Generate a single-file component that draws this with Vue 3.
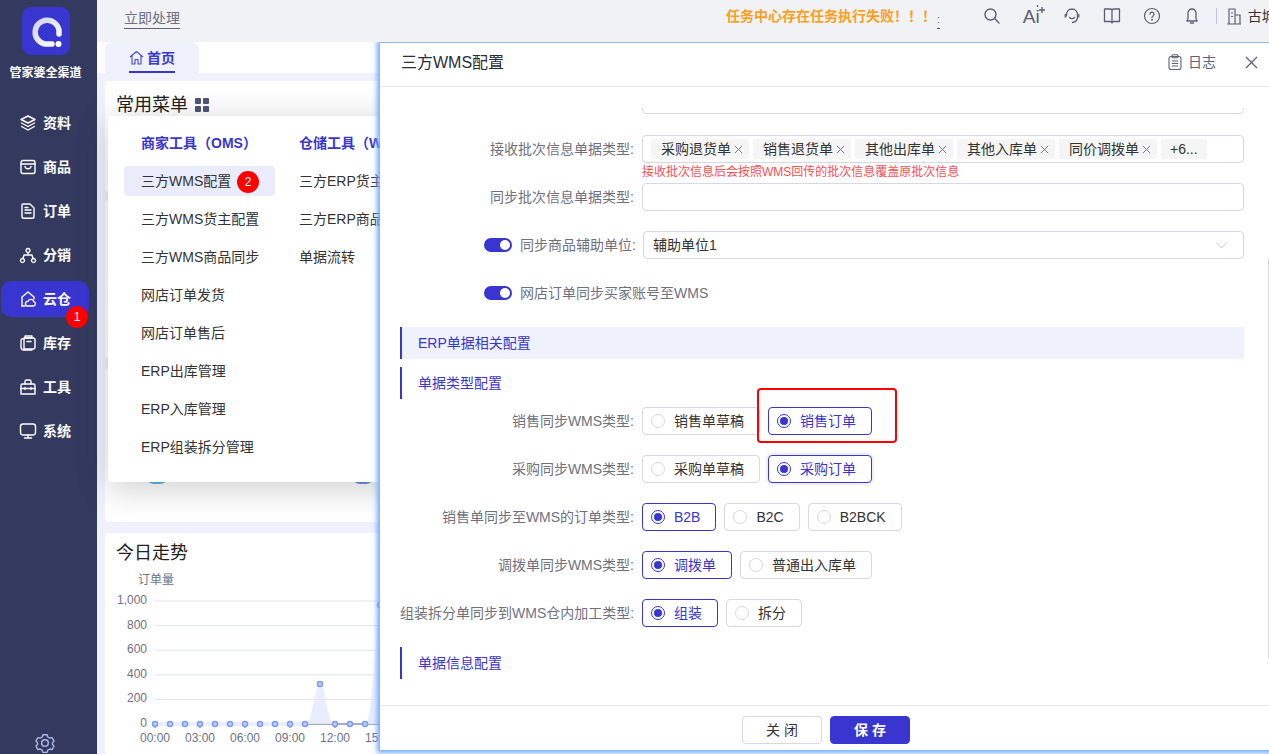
<template>
  <div class="app">
    <aside class="sidebar">
      <div class="logo">
        <svg width="48" height="48" viewBox="0 0 48 48">
          <defs>
            <linearGradient id="ring" x1="0" y1="0" x2="1" y2="1">
              <stop offset="0" stop-color="#cfd3f0" />
              <stop offset="1" stop-color="#ffffff" />
            </linearGradient>
          </defs>
          <rect width="48" height="48" rx="9" fill="#3935d0" />
          <path d="M30 37H23A12 12 0 1 1 37 23.500V27" fill="none" stroke="url(#ring)" stroke-width="5.500" stroke-linecap="round" />
          <circle cx="36.500" cy="37" r="3" fill="#fff" />
        </svg>
      </div>
      <div class="brand">管家婆全渠道</div>
      <nav class="nav">
        <div v-for="item in navItems" :key="item.name" class="nav-item" :class="{ active: item.name === '云仓' }">
          <svg width="18" height="18" viewBox="0 0 18 18" fill="none" stroke="#fff" stroke-width="1.400" stroke-linecap="round" stroke-linejoin="round">
            <path v-for="(d, i) in item.paths" :key="i" :d="d" />
          </svg>
          <span>{{ item.name }}</span>
          <i v-if="item.name === '云仓'" class="badge nav-badge">1</i>
        </div>
      </nav>
      <svg class="gear" width="22" height="22" viewBox="0 0 22 22" fill="none" stroke="#aeb6e4" stroke-width="1.500" stroke-linejoin="round">
        <path d="M8.600 2.200h4.800l.7 2.500 2.300 1.300 2.500-.7 2.200 4-1.800 1.700v2l1.800 1.700-2.200 4-2.500-.7-2.300 1.300-.7 2.500H8.600l-.7-2.500-2.300-1.300-2.500.7-2.200-4 1.800-1.700v-2L.9 9.300l2.200-4 2.500.7 2.300-1.300z" transform="translate(1.100 .8) scale(.9)" />
        <circle cx="11" cy="11" r="3.300" />
      </svg>
    </aside>

    <div class="main">
      <header class="topbar">
        <span class="todo">立即处理</span>
        <span class="warn">任务中心存在任务执行失败！！！</span>
        <span class="marquee-end">:</span>
        <div class="tools">
          <svg width="18" height="18" viewBox="0 0 18 18" fill="none" stroke="#5c5d76" stroke-width="1.400" stroke-linecap="round"><circle cx="7.500" cy="7.500" r="5.500" /><path d="M11.600 11.600 16 16" /></svg>
          <span class="ai">Ai<svg width="10" height="10" viewBox="0 0 10 10" fill="none" stroke="#5c5d76" stroke-width="1.300"><path d="M6 2v6M3 5h6" /><path d="M1.500 0v2" /></svg></span>
          <svg width="18" height="18" viewBox="0 0 18 18" fill="none" stroke="#5c5d76" stroke-width="1.300" stroke-linecap="round"><path d="M3.500 9V7.500a5.500 5.500 0 0 1 11 0V10c0 3-2 5-5 5.500" /><path d="M6.500 10.500c1.500 1.300 3.500 1.300 5 0" /><path d="M2.200 7.500v2.500M15.800 7.500v2.500" /></svg>
          <svg width="18" height="18" viewBox="0 0 18 18" fill="none" stroke="#5c5d76" stroke-width="1.300" stroke-linejoin="round"><path d="M1.500 2h5.500c1 0 2 .6 2 1.600V16c0-.8-1-1.500-2-1.500H1.500zM16.500 2H11c-1 0-2 .6-2 1.600V16c0-.8 1-1.500 2-1.500h5.500z" /></svg>
          <svg width="18" height="18" viewBox="0 0 18 18" fill="none" stroke="#5c5d76" stroke-width="1.200" stroke-linecap="round"><circle cx="9" cy="9" r="7.500" /><path d="M7 7.200a2 2 0 1 1 3 1.700c-.7.400-1 .8-1 1.600" /><circle cx="9" cy="12.700" r=".4" /></svg>
          <svg width="18" height="18" viewBox="0 0 18 18" fill="none" stroke="#5c5d76" stroke-width="1.300" stroke-linejoin="round" stroke-linecap="round"><path d="M9 2c-2.500 0-4 1.800-4 4.200V12l-1.200 2h10.400L13 12V6.200C13 3.800 11.500 2 9 2z" /><path d="M7.500 16h3" /></svg>
        </div>
        <i class="sep"></i>
        <svg class="building" width="16" height="18" viewBox="0 0 16 18" fill="none" stroke="#5c5d76" stroke-width="1.200"><path d="M3 17V2h6v15M9 8h5v9M1 17h14M5 6h2M5 9.500h2" /></svg>
        <span class="shop">古城</span>
      </header>

      <div class="tabbar">
        <div class="tab">
          <svg width="15" height="15" viewBox="0 0 15 15" fill="none" stroke="#4744d6" stroke-width="1.100" stroke-linejoin="round"><path d="M1 7 7.500 1.500 14 7M3 5.500V14h3V9.500h3V14h3V5.500" /></svg>
          <b>首页</b>
        </div>
      </div>

      <div class="content">
        <section class="card card-menu">
          <h2>常用菜单 <svg width="14" height="14" viewBox="0 0 14 14" fill="#50547a"><rect width="6" height="6" rx="1" /><rect x="8" width="6" height="6" rx="1" /><rect y="8" width="6" height="6" rx="1" /><rect x="8" y="8" width="6" height="6" rx="1" /></svg></h2>
        </section>
        <section class="card card-mid"></section>
        <section class="card card-low">
          <i class="peek peek-a"></i>
          <i class="peek peek-b"></i>
        </section>
        <section class="card card-trend">
          <h2>今日走势</h2>
          <svg class="chart" width="320" height="176" viewBox="0 0 320 176">
            <defs>
              <linearGradient id="area" x1="0" y1="0" x2="0" y2="1">
                <stop offset="0" stop-color="#e4ebff" stop-opacity=".4" />
                <stop offset="1" stop-color="#e4eaff" stop-opacity=".9" />
              </linearGradient>
            </defs>
            <text x="33" y="13" class="axis-name">订单量</text>
            <g v-for="(t, i) in yTicks" :key="t">
              <line x1="50" x2="320" :y1="30 + i * 24.600" :y2="30 + i * 24.600" stroke="#e0e4f0" />
              <text x="42" :y="33 + i * 24.600" text-anchor="end" class="tick">{{ t }}</text>
            </g>
            <path d="M50 153H320" stroke="#646878" />
            <path d="M50 153V157M95 153V157M140 153V157M185 153V157M230 153V157M275 153V157" stroke="#646878" />
            <path d="M200 153C208 153 209 113 215 113S222 153 230 153H260C268 153 270 60 275 34V153Z" fill="url(#area)" />
            <path d="M50 153H200" stroke="#eceffe" stroke-width="4" />
            <circle v-for="p in points" :key="p.x" :cx="p.x" :cy="p.y" r="2.500" fill="#c0d0ff" stroke="#7b9bf5" stroke-width="1.500" />
            <text v-for="(l, i) in xTicks" :key="l" :x="50 + i * 45" y="171" text-anchor="middle" class="tick">{{ l }}</text>
          </svg>
        </section>
      </div>
    </div>

    <div class="menu-pop">
      <div class="menu-col">
        <div class="menu-title">商家工具（OMS）</div>
        <div v-for="m in omsMenu" :key="m" class="menu-link" :class="{ hover: m === '三方WMS配置' }">
          {{ m }}
          <i v-if="m === '三方WMS配置'" class="badge menu-badge">2</i>
        </div>
      </div>
      <div class="menu-col">
        <div class="menu-title">仓储工具（WMS）</div>
        <div v-for="m in wmsMenu" :key="m" class="menu-link">{{ m }}</div>
      </div>
    </div>

    <div class="drawer">
      <div class="drawer-head">
        <span class="drawer-title">三方WMS配置</span>
        <span class="log">
          <svg width="14" height="16" viewBox="0 0 14 16" fill="none" stroke="#5f6079" stroke-width="1.100"><rect x="1" y="2.500" width="12" height="13" rx="2" /><rect x="4" y=".8" width="6" height="3" rx="1" /><path d="M3.800 7h6.400M3.800 9.500h6.400M3.800 12h6.400" /></svg>
          日志
        </span>
        <svg class="close" width="13" height="13" viewBox="0 0 13 13" stroke="#5f6079" stroke-width="1.300"><path d="M1 1l11 11M12 1 1 12" /></svg>
      </div>

      <div class="drawer-body">
        <div class="stub"></div>

        <div class="form-row tags-row">
          <label>接收批次信息单据类型:</label>
          <div class="control tags">
            <span v-for="t in tags" :key="t" class="tag">{{ t }}<svg width="9" height="9" viewBox="0 0 9 9" stroke="#77788a" stroke-width="1"><path d="M.8.8l7.400 7.400M8.200.8.800 8.200" /></svg></span>
            <span class="tag more">+6...</span>
          </div>
        </div>
        <div class="tip">接收批次信息后会按照WMS回传的批次信息覆盖原批次信息</div>

        <div class="form-row">
          <label>同步批次信息单据类型:</label>
          <div class="control"></div>
        </div>

        <div class="form-row switch-row select-row">
          <i class="switch"></i>
          <label>同步商品辅助单位:</label>
          <div class="control select">
            辅助单位1
            <svg width="11" height="7" viewBox="0 0 11 7" fill="none" stroke="#c4c5cf" stroke-width="1"><path d="M.5.800 5.500 6l5-5.200" /></svg>
          </div>
        </div>

        <div class="switch-row plain-switch">
          <i class="switch"></i>
          <label>网店订单同步买家账号至WMS</label>
        </div>

        <div class="section-bar">ERP单据相关配置</div>
        <div class="sub-title">单据类型配置</div>

        <div v-for="row in radioRows" :key="row.label" class="form-row radio-row">
          <label>{{ row.label }}:</label>
          <div class="radios">
            <span
              v-for="o in row.options"
              :key="o"
              class="radio"
              :class="{ checked: o === row.value, focused: o === '采购订单' }"
            >
              <i class="dot"></i>{{ o }}
            </span>
          </div>
        </div>

        <div class="sub-title last">单据信息配置</div>
        <div class="red-mark"></div>
      </div>

      <div class="drawer-foot">
        <button class="btn">关 闭</button>
        <button class="btn primary">保 存</button>
      </div>
      <i class="scroll-thumb"></i>
    </div>
  </div>
</template>

<script setup>
const navItems = [
  { name: '资料', paths: ['M9 2 16 5.500 9 9 2 5.500z', 'M2.500 9 9 12.500 15.500 9', 'M2.500 12.500 9 16l6.500-3.500'] },
  { name: '商品', paths: ['M4 2.500h10a2 2 0 0 1 2 2v9a2 2 0 0 1-2 2H4a2 2 0 0 1-2-2v-9a2 2 0 0 1 2-2z', 'M2 6h14', 'M6 8.500c.5 3 5.500 3 6 0'] },
  { name: '订单', paths: ['M4 2h7l4 4v8.500a1.800 1.800 0 0 1-1.800 1.800H4.800A1.800 1.800 0 0 1 3 14.500V3a1 1 0 0 1 1-1z', 'M6 8h6M6 11h6M6 5.500h3'] },
  { name: '分销', paths: ['M9 2.500a2 2 0 1 1-.01 0z', 'M3.500 12.500a2 2 0 1 1-.01 0z', 'M14.500 12.500a2 2 0 1 1-.01 0z', 'M9 6.500V9M4 12.500l1-3.500h8l1 3.500'] },
  { name: '云仓', paths: ['M3 16V7l6-5 6 5v2', 'M3 16h3', 'M8 16h6.500a2.200 2.200 0 0 0 .3-4.300 3 3 0 0 0-5.700-.5A2.500 2.500 0 0 0 8 16z'] },
  { name: '库存', paths: ['M5 4h9a2 2 0 0 1 2 2v7a2 2 0 0 1-2 2H5z', 'M5 5a2 2 0 0 0-3 1.500V13a3 3 0 0 0 3 3h8', 'M6 2h7v2H6zM8 7.500h4'] },
  { name: '工具', paths: ['M3.500 6h11a1.500 1.500 0 0 1 1.500 1.500V16H2V7.500A1.500 1.500 0 0 1 3.500 6z', 'M6 6V3.500A1.500 1.500 0 0 1 7.500 2h3A1.500 1.500 0 0 1 12 3.500V6', 'M2 10.500h14M6 9.500v2M12 9.500v2'] },
  { name: '系统', paths: ['M4 2h10a2.500 2.500 0 0 1 2.500 2.500v6A2.500 2.500 0 0 1 14 13H4a2.500 2.500 0 0 1-2.500-2.500v-6A2.500 2.500 0 0 1 4 2z', 'M9 13v3M5.500 16h7'] }
]

const omsMenu = ['三方WMS配置', '三方WMS货主配置', '三方WMS商品同步', '网店订单发货', '网店订单售后', 'ERP出库管理', 'ERP入库管理', 'ERP组装拆分管理']
const wmsMenu = ['三方ERP货主配置', '三方ERP商品同步', '单据流转']

const tags = ['采购退货单', '销售退货单', '其他出库单', '其他入库单', '同价调拨单']

const radioRows = [
  { label: '销售同步WMS类型', options: ['销售单草稿', '销售订单'], value: '销售订单' },
  { label: '采购同步WMS类型', options: ['采购单草稿', '采购订单'], value: '采购订单' },
  { label: '销售单同步至WMS的订单类型', options: ['B2B', 'B2C', 'B2BCK'], value: 'B2B' },
  { label: '调拨单同步WMS类型', options: ['调拨单', '普通出入库单'], value: '调拨单' },
  { label: '组装拆分单同步到WMS仓内加工类型', options: ['组装', '拆分'], value: '组装' }
]

const yTicks = ['1,000', '800', '600', '400', '200', '0']
const xTicks = ['00:00', '03:00', '06:00', '09:00', '12:00', '15:00']
const points = Array.from({ length: 16 }, (_, i) => ({
  x: 50 + i * 15,
  y: i === 11 ? 113 : i === 15 ? 34 : 153
}))
</script>

<style>
html,
body {
  margin: 0;
  overflow: hidden;
}
</style>

<style scoped>
.app {
  position: relative;
  display: flex;
  width: 1269px;
  height: 754px;
  overflow: hidden;
  background: #fff;
  color: #333;
  font-family: "Liberation Sans", "Noto Sans CJK SC", sans-serif;
  font-size: 14px;
}

.sidebar {
  position: relative;
  flex: 0 0 97px;
  box-sizing: border-box;
  padding-right: 6px;
  display: flex;
  flex-direction: column;
  align-items: center;
  background: #343a5f;
  color: #fff;
}

.logo {
  height: 48px;
  margin-top: 7px;
}

.brand {
  margin-top: 10px;
  font-size: 12px;
  font-weight: 700;
  line-height: 16px;
  white-space: nowrap;
}

.nav {
  align-self: stretch;
  margin-top: 24px;
  display: flex;
  flex-direction: column;
  gap: 8px;
}

.nav-item {
  position: relative;
  width: 88px;
  height: 36px;
  margin-left: 1px;
  padding-left: 18px;
  box-sizing: border-box;
  display: flex;
  align-items: center;
  gap: 6px;
  border-radius: 10px;
  font-weight: 700;
  line-height: 20px;
}

.nav-item.active {
  background: #3935d0;
}

.badge {
  position: absolute;
  width: 22px;
  height: 22px;
  border-radius: 50%;
  background: #ff0000;
  color: #fff;
  font-style: normal;
  font-weight: 400;
  font-size: 12px;
  line-height: 22px;
  text-align: center;
}

.nav-badge {
  right: 1px;
  top: 25px;
}

.gear {
  position: absolute;
  left: 34px;
  bottom: 0;
}

.main {
  flex: 1;
  min-width: 0;
  display: flex;
  flex-direction: column;
}

.topbar {
  position: relative;
  z-index: 1;
  height: 42px;
  flex: none;
  display: flex;
  align-items: center;
  background: #f1f2f6;
  overflow: hidden;
  white-space: nowrap;
}

.topbar > * {
  flex: none;
}

.todo {
  margin-left: 27px;
  margin-top: -4px;
  padding-bottom: 1px;
  border-bottom: 1px solid #60627e;
  color: #6e6f83;
  line-height: 18px;
}

.warn {
  margin-left: 546px;
  margin-top: -10px;
  color: #ff9f1c;
  font-weight: 700;
  line-height: 20px;
}

.marquee-end {
  margin-left: 1px;
  margin-top: -2px;
  font-size: 10px;
  color: #666;
  border-bottom: 1px solid #555;
  line-height: 16px;
}

.tools {
  margin-left: 43px;
  margin-top: -10px;
  display: flex;
  align-items: center;
  gap: 22px;
}

.ai {
  position: relative;
  width: 18px;
  color: #5c5d76;
  font-size: 19px;
  line-height: 20px;
  margin-top: 2px;
}

.ai svg {
  position: absolute;
  left: 13px;
  top: -2px;
}

.sep {
  width: 1px;
  height: 16px;
  margin: -10px 0 0 15px;
  background: #bfc6ea;
}

.building {
  margin: -10px 0 0 9px;
}

.shop {
  margin: -10px 0 0 6px;
  color: #333;
  line-height: 20px;
}

.tabbar {
  height: 31px;
  flex: none;
  padding-left: 8px;
  background: #fff;
}

.tab {
  width: 94px;
  height: 31px;
  box-sizing: border-box;
  padding: 0 0 0 24px;
  display: flex;
  align-items: center;
  gap: 3px;
  background: #eff1fd;
  border-radius: 8px 8px 0 0;
  color: #3935d0;
  position: relative;
  line-height: 20px;
}

.tab::after {
  content: "";
  position: absolute;
  left: 24px;
  bottom: 0;
  width: 46px;
  height: 2px;
  background: #3935d0;
}

.content {
  flex: 1;
  min-height: 0;
  padding: 8px 0 0 8px;
  background: #eff1fd;
  display: flex;
  flex-direction: column;
  gap: 8px;
}

.card {
  position: relative;
  flex: none;
  background: #fff;
  border-radius: 4px;
}

.card h2 {
  display: flex;
  align-items: center;
  gap: 7px;
  margin: 0;
  padding: 12px 0 0 11px;
  font-size: 18px;
  font-weight: 400;
  line-height: 24px;
  color: #222;
}

.card-menu {
  height: 111px;
}

.card-mid {
  height: 158px;
}

.card-low {
  height: 154px;
  margin-top: 2px;
}

.card-trend {
  margin-top: 3px;
  height: 221px;
}

.card-trend h2 {
  padding-top: 8px;
}

.peek {
  position: absolute;
  top: 114px;
  width: 16px;
  height: 2px;
  border-radius: 0 0 8px 8px / 0 0 2px 2px;
  background: #62b4e8;
}

.peek-a {
  left: 44px;
}

.peek-b {
  left: 250px;
  background: #6f8ee8;
}

.chart {
  display: block;
  margin: 6px 0 0 0;
}

.axis-name,
.tick {
  font-family: "Liberation Sans", "Noto Sans CJK SC", sans-serif;
  font-size: 12px;
  fill: #707184;
}

.menu-pop {
  position: absolute;
  left: 108px;
  top: 116px;
  width: 340px;
  height: 366px;
  box-sizing: border-box;
  padding: 17px 0 0 16px;
  display: flex;
  gap: 24px;
  background: #fff;
  border-radius: 4px;
  box-shadow: 0 6px 34px rgba(0, 0, 0, .2);
}

.menu-col {
  flex: 0 0 151px;
  display: flex;
  flex-direction: column;
}

.menu-title {
  height: 20px;
  margin: 0 0 13px 17px;
  line-height: 20px;
  font-weight: 700;
  color: #3935d0;
  white-space: nowrap;
}

.menu-link {
  position: relative;
  height: 30px;
  margin-bottom: 8px;
  padding-left: 17px;
  border-radius: 4px;
  line-height: 30px;
  color: #333;
  white-space: nowrap;
}

.menu-col + .menu-col .menu-title,
.menu-col + .menu-col .menu-link {
  margin-left: 0;
  padding-left: 0;
}

.menu-link.hover {
  background: #ebecfb;
}

.menu-badge {
  left: 113px;
  top: 5px;
}

.drawer {
  position: absolute;
  left: 380px;
  top: 43px;
  width: 889px;
  height: 707px;
  display: flex;
  flex-direction: column;
  background: #fff;
  box-shadow: 0 0 5px 3px #72aaff;
}

.drawer-head {
  height: 43px;
  flex: none;
  display: flex;
  align-items: center;
  padding: 0 11px 0 21px;
  border-bottom: 1px solid #ececf0;
}

.drawer-title {
  flex: 1;
  margin-top: -4px;
  font-size: 16px;
  line-height: 22px;
  color: #2c2d3a;
}

.log {
  display: flex;
  align-items: center;
  gap: 6px;
  margin-top: -5px;
  color: #5f6079;
  line-height: 20px;
}

.close {
  margin: -5px 0 0 29px;
}

.drawer-body {
  position: relative;
  flex: 1;
  min-height: 0;
  overflow: hidden;
  padding: 0 25px 0 20px;
}

.stub {
  height: 6px;
  margin: 21px 0 21px 242px;
  box-sizing: border-box;
  border: 1px solid #d8d8e4;
  border-top: 0;
  border-radius: 0 0 5px 5px;
}

.form-row {
  display: flex;
  align-items: center;
  min-height: 28px;
}

.form-row > label {
  flex: 0 0 234px;
  margin-right: 8px;
  text-align: right;
  white-space: nowrap;
  line-height: 20px;
  color: #70717f;
}

.control {
  flex: 1;
  height: 28px;
  box-sizing: border-box;
  border: 1px solid #d8d8e4;
  border-radius: 4px;
}

.tags {
  display: flex;
  align-items: center;
  gap: 4px;
  padding-left: 8px;
}

.tag {
  display: flex;
  align-items: center;
  gap: 3px;
  height: 20px;
  box-sizing: border-box;
  padding: 0 6px 0 10px;
  background: #f5f5f5;
  border-radius: 2px;
  line-height: 20px;
  color: #333;
  white-space: nowrap;
}

.tag.more {
  width: 46px;
  padding: 0 0 0 9px;
}

.tip {
  height: 20px;
  margin-left: 242px;
  font-size: 12px;
  line-height: 18px;
  color: #ff4d4f;
}

.switch-row {
  position: relative;
}

.select-row {
  margin-top: 20px;
}

.select-row > label {
  flex: 0 0 116px;
  margin-left: 120px;
  margin-right: 6px;
}

.select-row .switch {
  position: absolute;
  left: 84px;
  top: 7px;
}

.select {
  margin-left: 1px;
  padding: 0 16px 0 9px;
  display: flex;
  align-items: center;
  justify-content: space-between;
  line-height: 20px;
}

.plain-switch {
  height: 20px;
  margin-top: 24px;
  display: flex;
  align-items: center;
  padding-left: 84px;
  gap: 8px;
  color: #70717f;
  line-height: 20px;
}

.switch {
  position: relative;
  display: block;
  width: 28px;
  height: 14px;
  flex: none;
  background: #3935d0;
  border-radius: 7px;
}

.switch::after {
  content: "";
  position: absolute;
  right: 2px;
  top: 2px;
  width: 10px;
  height: 10px;
  border-radius: 50%;
  background: #fff;
}

.section-bar {
  height: 32px;
  margin-top: 24px;
  padding-left: 16px;
  background: #eff1fd;
  border-left: 2px solid #3935d0;
  color: #3935d0;
  line-height: 32px;
}

.sub-title {
  height: 32px;
  margin: 8px 0;
  padding-left: 16px;
  border-left: 2px solid #3935d0;
  color: #3935d0;
  line-height: 32px;
}

.sub-title.last {
  margin-top: 20px;
}

.radio-row {
  margin-bottom: 20px;
}

.radio-row:nth-last-of-type(3) {
  margin-bottom: 0;
}

.radios {
  display: flex;
  gap: 8px;
}

.radio {
  height: 28px;
  box-sizing: border-box;
  padding: 0 15px 0 8px;
  display: flex;
  align-items: center;
  gap: 9px;
  border: 1px solid #d8d8e4;
  border-radius: 4px;
  color: #333;
  line-height: 20px;
  white-space: nowrap;
}

.radio.checked {
  border-color: #3935d0;
  color: #3935d0;
}

.radio.focused {
  box-shadow: 0 0 0 2px #eeeffb;
}

.dot {
  position: relative;
  width: 14px;
  height: 14px;
  box-sizing: border-box;
  border: 1px solid #d8d8e4;
  border-radius: 50%;
}

.checked .dot {
  border-color: #3935d0;
}

.checked .dot::after {
  content: "";
  position: absolute;
  left: 2px;
  top: 2px;
  width: 8px;
  height: 8px;
  border-radius: 50%;
  background: #3935d0;
}

.red-mark {
  position: absolute;
  left: 377px;
  top: 301px;
  width: 140px;
  height: 55px;
  box-sizing: border-box;
  border: 2px solid #f00;
  border-radius: 4px;
}

.drawer-foot {
  height: 45px;
  flex: none;
  box-sizing: border-box;
  padding: 10px 0 0 3px;
  display: flex;
  justify-content: center;
  gap: 8px;
  border-top: 1px solid #ececf0;
}

.btn {
  width: 80px;
  height: 28px;
  padding: 0;
  border: 1px solid #d8d8e4;
  border-radius: 4px;
  background: #fff;
  color: #333;
  font-family: inherit;
  font-size: 14px;
  line-height: 20px;
}

.btn.primary {
  border-color: #3935d0;
  background: #3935d0;
  color: #fff;
  font-weight: 700;
}

.scroll-thumb {
  position: absolute;
  right: 0;
  top: 215px;
  width: 1px;
  height: 400px;
  background: #d5dae6;
}
</style>
